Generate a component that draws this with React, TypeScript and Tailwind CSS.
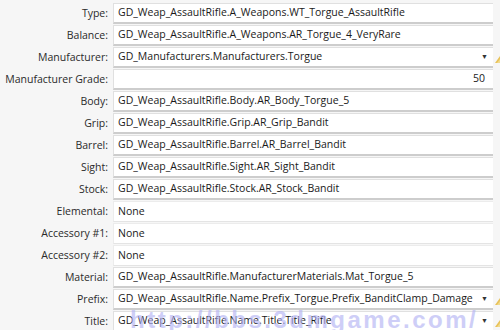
import React from 'react';

type Row = { label: string; value: string; kind?: 'combo' | 'number' | 'flat' };

const rows: Row[] = [
  { label: 'Type:', value: 'GD_Weap_AssaultRifle.A_Weapons.WT_Torgue_AssaultRifle' },
  { label: 'Balance:', value: 'GD_Weap_AssaultRifle.A_Weapons.AR_Torgue_4_VeryRare' },
  { label: 'Manufacturer:', value: 'GD_Manufacturers.Manufacturers.Torgue', kind: 'combo' },
  { label: 'Manufacturer Grade:', value: '50', kind: 'number' },
  { label: 'Body:', value: 'GD_Weap_AssaultRifle.Body.AR_Body_Torgue_5' },
  { label: 'Grip:', value: 'GD_Weap_AssaultRifle.Grip.AR_Grip_Bandit' },
  { label: 'Barrel:', value: 'GD_Weap_AssaultRifle.Barrel.AR_Barrel_Bandit' },
  { label: 'Sight:', value: 'GD_Weap_AssaultRifle.Sight.AR_Sight_Bandit' },
  { label: 'Stock:', value: 'GD_Weap_AssaultRifle.Stock.AR_Stock_Bandit' },
  { label: 'Elemental:', value: 'None', kind: 'flat' },
  { label: 'Accessory #1:', value: 'None', kind: 'flat' },
  { label: 'Accessory #2:', value: 'None', kind: 'flat' },
  { label: 'Material:', value: 'GD_Weap_AssaultRifle.ManufacturerMaterials.Mat_Torgue_5' },
  { label: 'Prefix:', value: 'GD_Weap_AssaultRifle.Name.Prefix_Torgue.Prefix_BanditClamp_Damage', kind: 'combo' },
  { label: 'Title:', value: 'GD_Weap_AssaultRifle.Name.Title.Title_Rifle', kind: 'combo' },
];

function Grip() {
  return (
    <svg width="6" height="8" viewBox="0 0 6 8" className="mt-[8px]">
      <path d="M1 8 L6 1 L6 8 Z" fill="#e8c25a" />
      <path d="M3 8 L6 4 L6 8 Z" fill="#f3dc8c" />
    </svg>
  );
}

function Field({ row }: { row: Row }) {
  const flat = row.kind === 'flat';
  const num = row.kind === 'number';
  return (
    <div
      className={`h-[21px] flex items-center bg-white border-l border-t ${
        flat ? 'border-[#ececec] border-b border-b-[#e4e4e4]' : 'border-[#e0e0e0] border-b-2 border-b-[#cdcdcd]'
      } pl-[4px] ${num ? 'justify-end pr-[8px]' : 'pr-[5px]'}`}
    >
      <span className={num ? '' : 'flex-1 whitespace-nowrap overflow-hidden'}>{row.value}</span>
      {row.kind === 'combo' && <span className="text-[7px] text-[#333] pl-[4px]">▼</span>}
    </div>
  );
}

export default function App() {
  return (
    <div
      className="relative w-[500px] h-[330px] overflow-hidden bg-[#f6f6f6] pt-[3px] text-[10.5px] text-[#1a1a1a]"
      style={{ fontFamily: '"Open Sans", "Noto Sans", sans-serif' }}
    >
      <div className="grid grid-cols-[113px_380px_7px] auto-rows-[22px]">
        {rows.map((r) => (
          <React.Fragment key={r.label}>
            <div className="flex items-center justify-end pr-[5px] text-[#2a2a2a] whitespace-nowrap">{r.label}</div>
            <Field row={r} />
            <div className="flex justify-end">{r.kind === 'combo' && <Grip />}</div>
          </React.Fragment>
        ))}
      </div>
      {/* watermark */}
      <div
        className="absolute left-[130px] top-[308px] text-[24px] leading-[24px] font-bold tracking-[2.5px] text-[#b4b4f4] opacity-65 whitespace-nowrap pointer-events-none"
        style={{ fontFamily: '"Liberation Sans", Arial, sans-serif' }}
      >
        http://bbs.3dmgame.com/
      </div>
    </div>
  );
}
